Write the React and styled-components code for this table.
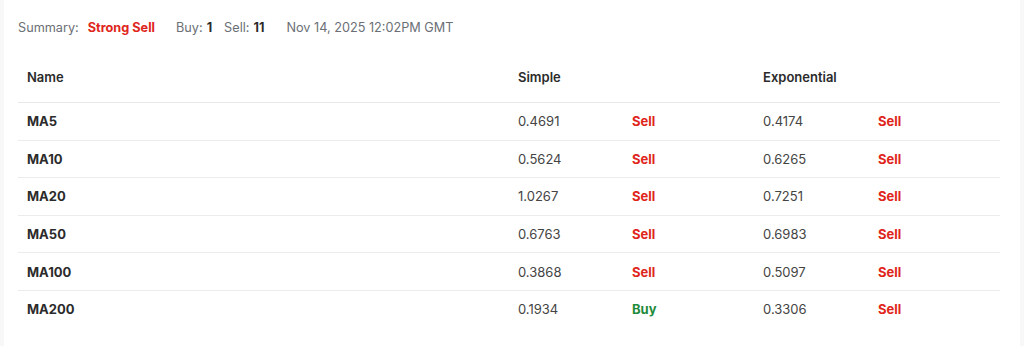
import React from 'react';
import styled, { createGlobalStyle } from 'styled-components';

const Global = createGlobalStyle`
    body {
        margin:0;
        background:#f8f8f8;
        font-family:Inter, "Liberation Sans", sans-serif;
    }
`

const Page = styled.div`
    margin:0 4px;
    height:346px;
    background:#fff;
    padding:17px 20px 0 14px;
    box-sizing:border-box;
`

const Summary = styled.div`
    display:flex;
    align-items:center;
    font-size:12.7px;
    color:#6b6f76;
    height:20px;
`

const Item = styled.span`
    margin-right:${p => p.gap || 0}px;
`

const Strong = styled.b`
    font-weight:700;
    color:${p => p.red ? '#e0261c' : '#2b2b2b'};
    margin-left:${p => p.ml || 4}px;
`

const Table = styled.table`
    width:982px;
    margin-top:18px;
    border-collapse:collapse;
    table-layout:fixed;
    font-size:13px;
    color:#333;
`

const Th = styled.th`
    text-align:left;
    font-weight:600;
    color:#2b2b2b;
    height:43px;
    padding:0 9px 4px;
    border-bottom:1px solid #e8e8e8;
`

const Td = styled.td`
    height:36.6px;
    padding:0 9px;
    border-bottom:${p => p.last ? 'none' : '1px solid #ececec'};
    font-weight:${p => p.bold ? 700 : 400};
    color:${p => p.signal === 'Sell' ? '#e0261c' : p.signal === 'Buy' ? '#1f8a3a' : p.bold ? '#2b2b2b' : '#444'};
`

const rows = [
    ['MA5', '0.4691', 'Sell', '0.4174', 'Sell'],
    ['MA10', '0.5624', 'Sell', '0.6265', 'Sell'],
    ['MA20', '1.0267', 'Sell', '0.7251', 'Sell'],
    ['MA50', '0.6763', 'Sell', '0.6983', 'Sell'],
    ['MA100', '0.3868', 'Sell', '0.5097', 'Sell'],
    ['MA200', '0.1934', 'Buy', '0.3306', 'Sell'],
]

const App = () => {
    return (
        <>
            <Global />
            <Page>
                <Summary>
                    <Item gap={21}>Summary:<Strong red ml={9}>Strong Sell</Strong></Item>
                    <Item gap={12}>Buy:<Strong>1</Strong></Item>
                    <Item gap={22}>Sell:<Strong>11</Strong></Item>
                    <Item>Nov 14, 2025 12:02PM GMT</Item>
                </Summary>
                <Table>
                    <colgroup>
                        <col style={{ width: 491 }} />
                        <col style={{ width: 114 }} />
                        <col style={{ width: 131 }} />
                        <col style={{ width: 115 }} />
                        <col style={{ width: 131 }} />
                    </colgroup>
                    <thead>
                        <tr>
                            <Th>Name</Th>
                            <Th colSpan={2}>Simple</Th>
                            <Th colSpan={2}>Exponential</Th>
                        </tr>
                    </thead>
                    <tbody>
                        {rows.map((r, i) => (
                            <tr key={r[0]}>
                                <Td bold last={i === rows.length - 1}>{r[0]}</Td>
                                <Td last={i === rows.length - 1}>{r[1]}</Td>
                                <Td bold signal={r[2]} last={i === rows.length - 1}>{r[2]}</Td>
                                <Td last={i === rows.length - 1}>{r[3]}</Td>
                                <Td bold signal={r[4]} last={i === rows.length - 1}>{r[4]}</Td>
                            </tr>
                        ))}
                    </tbody>
                </Table>
            </Page>
        </>
    )
}

export default App;
